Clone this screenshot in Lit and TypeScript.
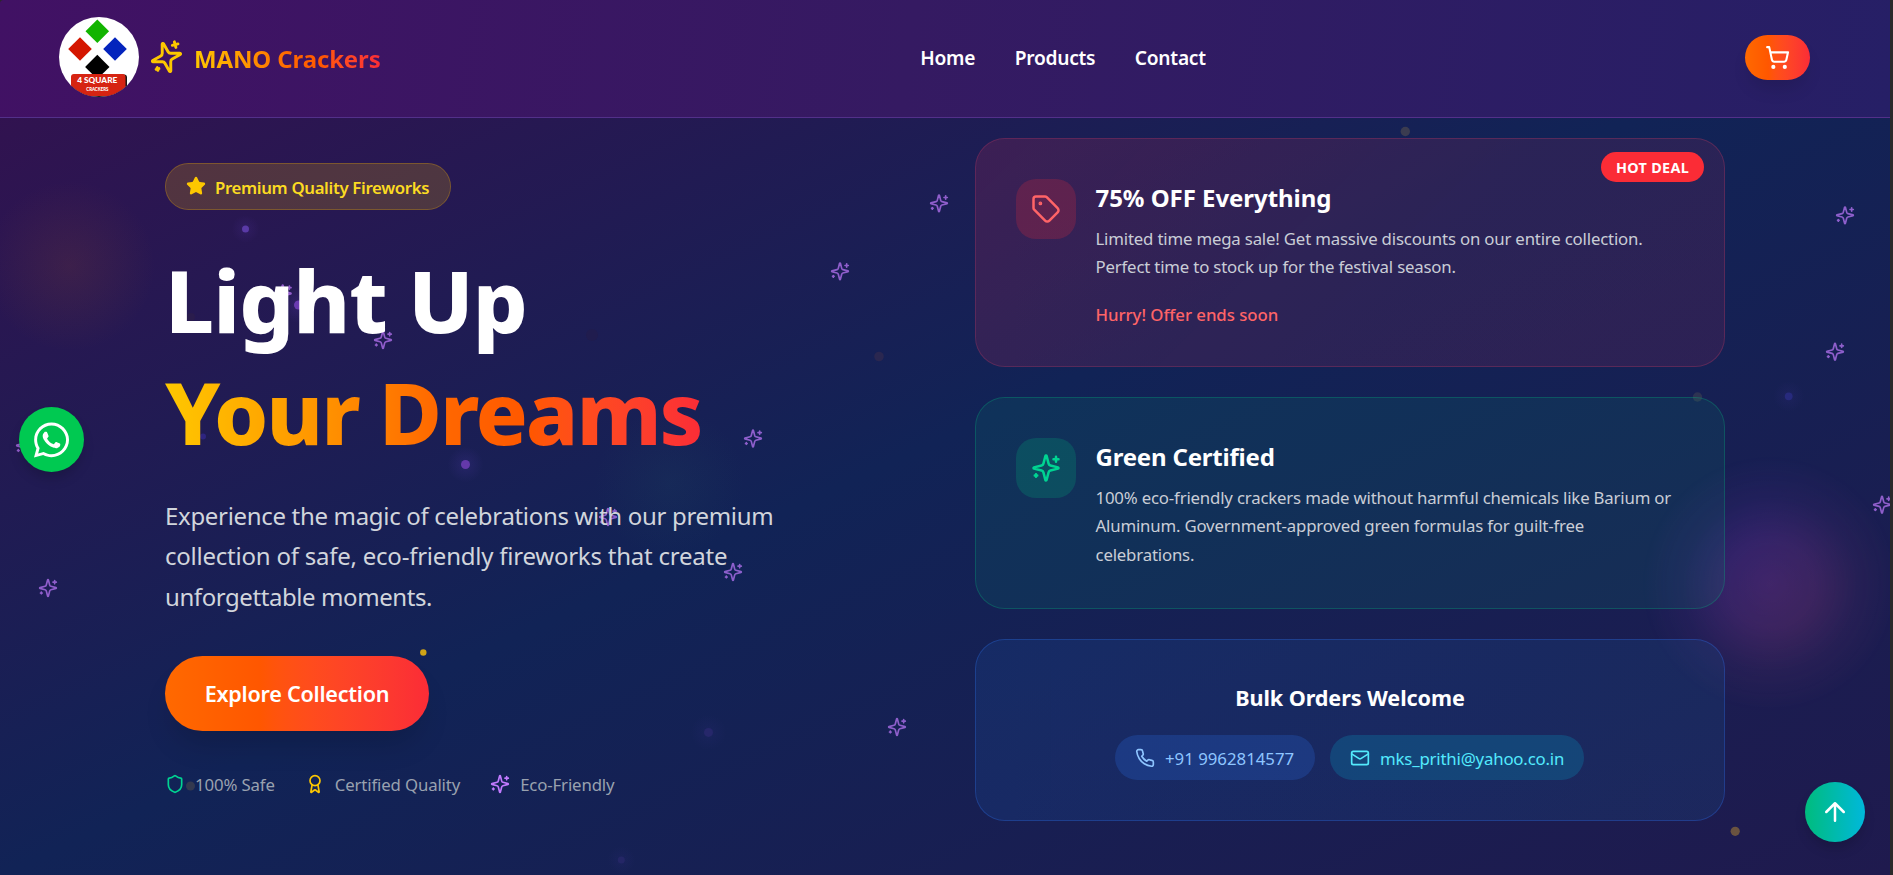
import { LitElement, html, svg, css } from 'lit';
import { customElement, property } from 'lit/decorators.js';

const ICONS: Record<string, unknown> = {
  sparkles: svg`<path d="M9.937 15.5A2 2 0 0 0 8.5 14.063l-6.135-1.582a.5.5 0 0 1 0-.962L8.5 9.936A2 2 0 0 0 9.937 8.5l1.582-6.135a.5.5 0 0 1 .963 0L14.063 8.5A2 2 0 0 0 15.5 9.937l6.135 1.581a.5.5 0 0 1 0 .964L15.5 14.063a2 2 0 0 0-1.437 1.437l-1.582 6.135a.5.5 0 0 1-.963 0z"/><path d="M20 3v4M22 5h-4M4 17v2M5 18H3"/>`,
  tag: svg`<path d="M12.586 2.586A2 2 0 0 0 11.172 2H4a2 2 0 0 0-2 2v7.172a2 2 0 0 0 .586 1.414l8.704 8.704a2.426 2.426 0 0 0 3.42 0l6.58-6.58a2.426 2.426 0 0 0 0-3.42z"/><circle cx="7.5" cy="7.5" r=".5" fill="currentColor"/>`,
  cart: svg`<circle cx="8" cy="21" r="1"/><circle cx="19" cy="21" r="1"/><path d="M2.05 2.05h2l2.66 12.42a2 2 0 0 0 2 1.58h9.78a2 2 0 0 0 1.95-1.57l1.65-7.43H5.12"/>`,
  shield: svg`<path d="M20 13c0 5-3.5 7.5-7.66 8.95a1 1 0 0 1-.67-.01C7.5 20.5 4 18 4 13V6a1 1 0 0 1 1-1c2 0 4.5-1.2 6.24-2.72a1.17 1.17 0 0 1 1.52 0C14.51 3.81 17 5 19 5a1 1 0 0 1 1 1z"/>`,
  award: svg`<path d="m15.477 12.89 1.515 8.526a.5.5 0 0 1-.81.47l-3.58-2.687a1 1 0 0 0-1.197 0l-3.586 2.686a.5.5 0 0 1-.81-.469l1.514-8.526"/><circle cx="12" cy="8" r="6"/>`,
  phone: svg`<path d="M22 16.92v3a2 2 0 0 1-2.18 2 19.79 19.79 0 0 1-8.63-3.07 19.5 19.5 0 0 1-6-6 19.79 19.79 0 0 1-3.07-8.67A2 2 0 0 1 4.11 2h3a2 2 0 0 1 2 1.72 12.84 12.84 0 0 0 .7 2.81 2 2 0 0 1-.45 2.11L8.09 9.91a16 16 0 0 0 6 6l1.27-1.27a2 2 0 0 1 2.11-.45 12.84 12.84 0 0 0 2.81.7A2 2 0 0 1 22 16.92z"/>`,
  mail: svg`<rect width="20" height="16" x="2" y="4" rx="2"/><path d="m22 7-8.97 5.7a1.94 1.94 0 0 1-2.06 0L2 7"/>`,
  star: svg`<path fill="currentColor" d="M11.525 2.295a.53.53 0 0 1 .95 0l2.31 4.679a2.123 2.123 0 0 0 1.595 1.16l5.166.756a.53.53 0 0 1 .294.904l-3.736 3.638a2.123 2.123 0 0 0-.611 1.878l.882 5.14a.53.53 0 0 1-.771.56l-4.618-2.428a2.122 2.122 0 0 0-1.973 0L6.396 21.01a.53.53 0 0 1-.77-.56l.881-5.139a2.122 2.122 0 0 0-.611-1.879L2.16 9.795a.53.53 0 0 1 .294-.906l5.165-.755a2.122 2.122 0 0 0 1.597-1.16z"/>`,
  up: svg`<path d="m5 12 7-7 7 7M12 19V5"/>`,
};

@customElement('line-icon')
class LineIcon extends LitElement {
  @property() name = 'sparkles';
  static styles = css`
    :host { display: block; width: 20px; height: 20px; flex: none; }
    svg { display: block; width: 100%; height: 100%; fill: none; stroke: currentColor; stroke-width: 2; stroke-linecap: round; stroke-linejoin: round; }
  `;
  render() {
    return html`<svg viewBox="0 0 24 24">${ICONS[this.name]}</svg>`;
  }
}

const SPARKLES = [
  [939, 203.3], [840, 271.3], [753, 438.5], [608, 517], [733, 572], [282.7, 293.5], [383, 340],
  [25, 445.5], [48, 588], [1845, 215.3], [1835, 351.7], [1882, 504.7], [897, 727],
];

/* x, y, radius, colour, glow */
const DOTS: [number, number, number, string, number][] = [
  [245.5, 229, 3.5, '#5a3aa6', 0.08],
  [298.5, 305, 4.5, '#6a3bb2', 0.12],
  [203, 436.5, 3, '#2e2480', 0],
  [465.5, 464.5, 4.5, '#6439aa', 0.1],
  [191, 317, 4, '#2a1c4c', 0],
  [592, 335, 6, '#201c4e', 0],
  [879, 356.5, 4.8, '#2a2750', 0],
  [423.3, 652.5, 3.2, '#d0a416', 0],
  [190.5, 786, 4.5, '#33394f', 0],
  [1405.3, 131.5, 4.7, '#3b3c50', 0],
  [1697.5, 397, 4.7, '#2d3352', 0],
  [1788.7, 396.3, 3.9, '#272a7d', 0.05],
  [1735.2, 831.3, 4.6, '#6a5340', 0],
  [708.5, 732.4, 4.5, '#26276a', 0.04],
  [621.3, 860, 3.5, '#242666', 0.04],
];

@customElement('app-root')
class AppRoot extends LitElement {
  static styles = css`
    :host {
      display: grid; grid-template-columns: 1fr 3px; height: 875px; background: #2a2a2a; color: #fff;
      font-family: 'Noto Sans', 'Open Sans', sans-serif; font-size: 16.8px; line-height: 25px; overflow: hidden;
    }
    * { box-sizing: border-box; }
    .page {
      position: relative; overflow: hidden; display: flex; flex-direction: column; border-top-left-radius: 4px;
      background: linear-gradient(to bottom right, #36104f, #112356 50%, #1f1a4e);
    }
    header, main { position: relative; }
    header {
      height: 118px; flex: none; padding: 0 80px 3px 59px; border-bottom: 1px solid #53308a;
      display: flex; align-items: center; justify-content: space-between;
      background: linear-gradient(98deg, #411164, #351a62 48%, #261f66);
    }
    .brand { display: flex; align-items: center; }
    .logo { width: 80px; height: 80px; display: block; }
    .brand line-icon { width: 35px; height: 35px; margin: 0 11px 0 10px; color: #fdc700; transform: rotate(-15deg); }
    .grad {
      color: transparent; -webkit-background-clip: text; background-clip: text;
      background-image: linear-gradient(to right in oklab, oklch(85.2% .199 91.936), oklch(70.5% .213 47.604), oklch(63.7% .237 25.331));
    }
    .brand .grad { font-weight: 700; font-size: 24px; letter-spacing: -.14px; padding-top: 3px; line-height: 32px; width: 187px; margin-left: -1px; white-space: nowrap; }
    nav { display: flex; gap: 39.5px; font-weight: 600; font-size: 19.2px; letter-spacing: -.26px; padding-top: 1px; }
    .cart {
      width: 65px; height: 45px; border-radius: 23px; display: grid; place-items: center;
      box-shadow: 0 12px 18px -4px rgba(0, 0, 0, .12);
    }
    .cart line-icon { width: 25px; height: 25px; }
    .hot { background: linear-gradient(to right in oklab, oklch(70.5% .213 47.604), oklch(63.7% .237 25.331)); }

    main { display: grid; grid-template-columns: 750px 750px; gap: 60px; justify-content: center; align-items: center; padding-top: 20px; }
    .intro { display: flex; flex-direction: column; align-items: flex-start; }
    .badge {
      display: flex; align-items: center; gap: 10px; height: 47px; width: 286px; padding: 0 19px 0 20px; border-radius: 24px;
      border: 1px solid rgba(240, 177, 0, .42); background: rgba(240, 177, 0, .2); background-clip: padding-box;
      color: #fcdb22; font-weight: 600; letter-spacing: -.34px; white-space: nowrap;
    }
    .badge line-icon { color: #fdc700; }
    .badge span { padding-top: 2px; margin-left: -1px; }
    h1 { margin: 30px 0 26px; padding-top: 4px; font-size: 86.4px; line-height: 112.5px; font-weight: 800; }
    h1 span { display: block; width: max-content; white-space: nowrap; }
    h1 .l1 { letter-spacing: -.95px; }
    h1 .grad { letter-spacing: -2.15px; padding-right: 2px; }
    .lead { margin: 0 0 39px; padding-top: 1px; font-size: 24px; line-height: 40.625px; color: #d1d5dc; }
    .lead span, .desc span { display: block; white-space: nowrap; }
    .lead .a { letter-spacing: -.32px; }
    .lead .b { letter-spacing: -.23px; }
    .lead .c { letter-spacing: -.42px; }
    .cta {
      width: 264px; height: 75px; border-radius: 38px; display: grid; place-items: center;
      font-size: 21.6px; font-weight: 600; letter-spacing: -.24px; box-shadow: 0 20px 30px -8px rgba(0, 0, 0, .16);
    }
    .facts { display: flex; gap: 30px; margin-top: 40px; color: #99a1af; letter-spacing: -.14px; }
    .facts div { display: flex; align-items: center; gap: 10px; }
    .facts span { padding-top: 2px; line-height: 23px; }
    .c-green { color: #00d492; }
    .c-yellow { color: #fdc700; }
    .c-purple { color: #c27aff; }

    .cards { display: flex; flex-direction: column; gap: 30px; }
    .card { position: relative; border: 1px solid; border-radius: 30px; padding: 40px; background-clip: padding-box; }
    .row { display: flex; gap: 20px; align-items: flex-start; }
    .row h2, .row .desc, .row .hurry { margin-left: -.5px; }
    .sale { height: 229px; border-color: rgba(251, 60, 100, .3); background-image: linear-gradient(135deg, rgba(116, 36, 86, .37), rgba(90, 37, 88, .35) 60%); }
    .green { height: 212px; border-color: rgba(0, 188, 125, .34); background-color: rgba(0, 188, 125, .1); }
    .bulk { height: 182px; border-color: rgba(43, 127, 255, .34); background-image: linear-gradient(to right, rgba(28, 80, 165, .22), rgba(28, 90, 150, .2)); text-align: center; }
    .tile { width: 60px; height: 60px; border-radius: 20px; display: grid; place-items: center; flex: none; }
    .tile line-icon { width: 30px; height: 30px; }
    .sale .tile { background: rgba(251, 44, 54, .2); color: #ff6467; }
    .green .tile { background: rgba(0, 188, 125, .2); color: #00d492; }
    h2 { margin: 0 0 9px; padding-top: 1px; font-size: 24px; line-height: 35px; font-weight: 700; letter-spacing: -.05px; }
    .green h2 { letter-spacing: -.2px; }
    .desc { margin: 0; padding-top: 1px; line-height: 28.4px; color: #c9cdd6; letter-spacing: -.18px; }
    .hurry { margin-top: 20px; color: #ff6467; font-weight: 500; letter-spacing: -.04px; }
    .deal {
      position: absolute; right: 20px; top: 13px; height: 30px; width: 103px; border-radius: 15px; background: #fb2c36;
      font-size: 14.4px; font-weight: 700; letter-spacing: .3px; line-height: 31px; text-align: center;
    }
    h3 { margin: 0 0 20px; font-size: 21.6px; line-height: 35px; font-weight: 700; letter-spacing: -.09px; }
    .pills { display: flex; justify-content: center; gap: 15px; margin-left: -1px; }
    .pills div { display: flex; align-items: center; gap: 10px; height: 45px; padding: 0 20px; border-radius: 23px; white-space: nowrap; }
    .pills span { padding-top: 1px; }
    .tel { width: 200px; background: rgba(43, 127, 255, .2); color: #8ec5ff; letter-spacing: 0; }
    .mail { width: 254px; background: rgba(0, 184, 219, .2); color: #53eafd; letter-spacing: -.18px; }

    .sky { position: absolute; inset: 0; width: 100%; height: 100%; }
    .spark { fill: none; stroke: #c27aff; stroke-width: 2; stroke-linecap: round; stroke-linejoin: round; opacity: .7; }
    .float { position: absolute; border-radius: 50%; display: grid; place-items: center; }
    .wa { left: 19px; top: 407px; width: 65px; height: 65px; background: #00c951; box-shadow: 0 8px 14px -3px rgba(0, 0, 0, .2); }
    .wa svg { width: 35px; height: 40px; fill: #fff; }
    .top { left: 1805px; top: 782px; width: 60px; height: 60px; background: linear-gradient(to right, #00bc7d, #00b8db); box-shadow: 0 8px 14px -3px rgba(0, 0, 0, .2); }
    .top line-icon { width: 30px; height: 30px; }
  `;

  private sky() {
    return html`<svg class="sky" viewBox="0 0 1890 875">
      <defs>
        <radialGradient id="ember"><stop offset="0" stop-color="#a0502a" stop-opacity=".16"/><stop offset=".45" stop-color="#a0502a" stop-opacity=".09"/><stop offset="1" stop-color="#a0502a" stop-opacity="0"/></radialGradient>
        <radialGradient id="teal"><stop offset="0" stop-color="#2a7070" stop-opacity=".1"/><stop offset="1" stop-color="#2a7070" stop-opacity="0"/></radialGradient>
        <radialGradient id="halo"><stop offset=".2" stop-color="#7d4ff0"/><stop offset="1" stop-color="#7d4ff0" stop-opacity="0"/></radialGradient>
        <linearGradient id="violetfill" x1="0" x2="1" y1="0" y2="1"><stop offset=".3" stop-color="#7a30b8"/><stop offset=".65" stop-color="#a03a84"/></linearGradient>
        <radialGradient id="violetmask"><stop offset="0" stop-color="#fff" stop-opacity=".33"/><stop offset=".35" stop-color="#fff" stop-opacity=".26"/><stop offset=".68" stop-color="#fff" stop-opacity=".09"/><stop offset="1" stop-color="#fff" stop-opacity="0"/></radialGradient>
        <mask id="vm"><circle cx="1770" cy="584" r="128" fill="url(#violetmask)"/></mask>
      </defs>
      <circle cx="70" cy="266" r="85" fill="url(#ember)"/>
      <circle cx="670" cy="483" r="75" fill="url(#teal)"/>
      <circle cx="1770" cy="584" r="128" fill="url(#violetfill)" mask="url(#vm)"/>
      ${DOTS.map(([x, y, r, c, g]) => svg`<circle cx=${x} cy=${y} r=${r * 4} fill="url(#halo)" opacity=${g}/><circle cx=${x} cy=${y} r=${r} fill=${c}/>`)}
      ${SPARKLES.map(([x, y]) => svg`<g class="spark" transform="translate(${x - 10} ${y - 10}) scale(.8333)">${ICONS.sparkles}</g>`)}
    </svg>`;
  }

  private logo() {
    return html`<svg class="logo" viewBox="0 0 80 80">
      <clipPath id="disc"><circle cx="40" cy="40" r="40"/></clipPath>
      <g clip-path="url(#disc)">
        <rect width="80" height="80" fill="#fff"/>
        <path d="M38.3 2.5 50.1 14.3 38.3 26.1 26.5 14.3z" fill="#12b400"/>
        <path d="M21 20.2 32.8 32 21 43.8 9.2 32z" fill="#d41600"/>
        <path d="M56 20.2 67.8 32 56 43.8 44.2 32z" fill="#0424bd"/>
        <path d="M38.3 37.7 50.5 49.9 38.3 62 26.1 49.9z" fill="#000"/>
        <rect x="13" y="57.5" width="55" height="24" rx="3" fill="#161616"/>
        <rect x="12" y="57" width="54.5" height="22" rx="3" fill="#d62412"/>
        <text x="18.3" y="66.4" font-family="Lato" font-weight="900" font-size="8" fill="#fff" textLength="40" lengthAdjust="spacingAndGlyphs">4 SQUARE</text>
        <text x="27.3" y="74.2" font-family="Lato" font-weight="900" font-size="4.6" fill="#fff" textLength="22" lengthAdjust="spacingAndGlyphs">CRACKERS</text>
      </g>
    </svg>`;
  }

  render() {
    return html`<div class="page">
      ${this.sky()}
      <header>
        <div class="brand">${this.logo()}<line-icon name="sparkles"></line-icon><span class="grad">MANO Crackers</span></div>
        <nav><span>Home</span><span>Products</span><span>Contact</span></nav>
        <div class="cart hot"><line-icon name="cart"></line-icon></div>
      </header>
      <main>
        <section class="intro">
          <div class="badge"><line-icon name="star"></line-icon><span>Premium Quality Fireworks</span></div>
          <h1><span class="l1">Light Up</span><span class="grad">Your Dreams</span></h1>
          <p class="lead">
            <span class="a">Experience the magic of celebrations with our premium</span>
            <span class="b">collection of safe, eco-friendly fireworks that create</span>
            <span class="c">unforgettable moments.</span>
          </p>
          <div class="cta hot">Explore Collection</div>
          <div class="facts">
            <div><line-icon class="c-green" name="shield"></line-icon><span>100% Safe</span></div>
            <div><line-icon class="c-yellow" name="award"></line-icon><span>Certified Quality</span></div>
            <div><line-icon class="c-purple" name="sparkles"></line-icon><span>Eco-Friendly</span></div>
          </div>
        </section>
        <section class="cards">
          <article class="card sale">
            <div class="deal">HOT DEAL</div>
            <div class="row">
              <div class="tile"><line-icon name="tag"></line-icon></div>
              <div>
                <h2>75% OFF Everything</h2>
                <p class="desc"><span>Limited time mega sale! Get massive discounts on our entire collection.</span><span>Perfect time to stock up for the festival season.</span></p>
                <div class="hurry">Hurry! Offer ends soon</div>
              </div>
            </div>
          </article>
          <article class="card green">
            <div class="row">
              <div class="tile"><line-icon name="sparkles"></line-icon></div>
              <div>
                <h2>Green Certified</h2>
                <p class="desc"><span>100% eco-friendly crackers made without harmful chemicals like Barium or</span><span>Aluminum. Government-approved green formulas for guilt-free</span><span>celebrations.</span></p>
              </div>
            </div>
          </article>
          <article class="card bulk">
            <h3>Bulk Orders Welcome</h3>
            <div class="pills">
              <div class="tel"><line-icon name="phone"></line-icon><span>+91 9962814577</span></div>
              <div class="mail"><line-icon name="mail"></line-icon><span>mks_prithi@yahoo.co.in</span></div>
            </div>
          </article>
        </section>
      </main>
      <div class="float wa"><svg viewBox="0 0 448 512"><path d="M380.9 97.1C339 55.1 283.2 32 223.9 32c-122.4 0-222 99.6-222 222 0 39.1 10.2 77.3 29.6 111L0 480l117.7-30.9c32.4 17.7 68.9 27 106.1 27h.1c122.3 0 224.1-99.6 224.1-222 0-59.3-25.2-115-67.1-157zm-157 341.6c-33.2 0-65.7-8.9-94-25.7l-6.7-4-69.8 18.3L72 359.2l-4.4-7c-18.5-29.4-28.2-63.3-28.2-98.2 0-101.7 82.8-184.5 184.6-184.5 49.3 0 95.6 19.2 130.4 54.1 34.8 34.9 56.2 81.2 56.1 130.5 0 101.8-84.9 184.6-186.6 184.6zm101.2-138.2c-5.5-2.8-32.8-16.2-37.9-18-5.1-1.9-8.8-2.8-12.5 2.8-3.7 5.6-14.3 18-17.6 21.8-3.2 3.7-6.5 4.2-12 1.4-32.6-16.3-54-29.1-75.5-66-5.7-9.8 5.7-9.1 16.3-30.3 1.8-3.7.9-6.9-.5-9.7-1.4-2.8-12.5-30.1-17.1-41.2-4.5-10.8-9.1-9.3-12.5-9.3-3.2-.2-6.9-.2-10.6-.2-3.7 0-9.7 1.4-14.8 6.9-5.1 5.6-19.4 19-19.4 46.3 0 27.3 19.9 53.7 22.6 57.4 2.8 3.7 39.1 59.7 94.8 83.8 35.2 15.2 49 16.5 66.6 13.9 10.7-1.6 32.8-13.4 37.4-26.4 4.6-13 4.6-24.1 3.2-27.3-1.3-3.3-5-4.6-10.5-7.4z"/></svg></div>
      <div class="float top"><line-icon name="up"></line-icon></div>
    </div>`;
  }
}
